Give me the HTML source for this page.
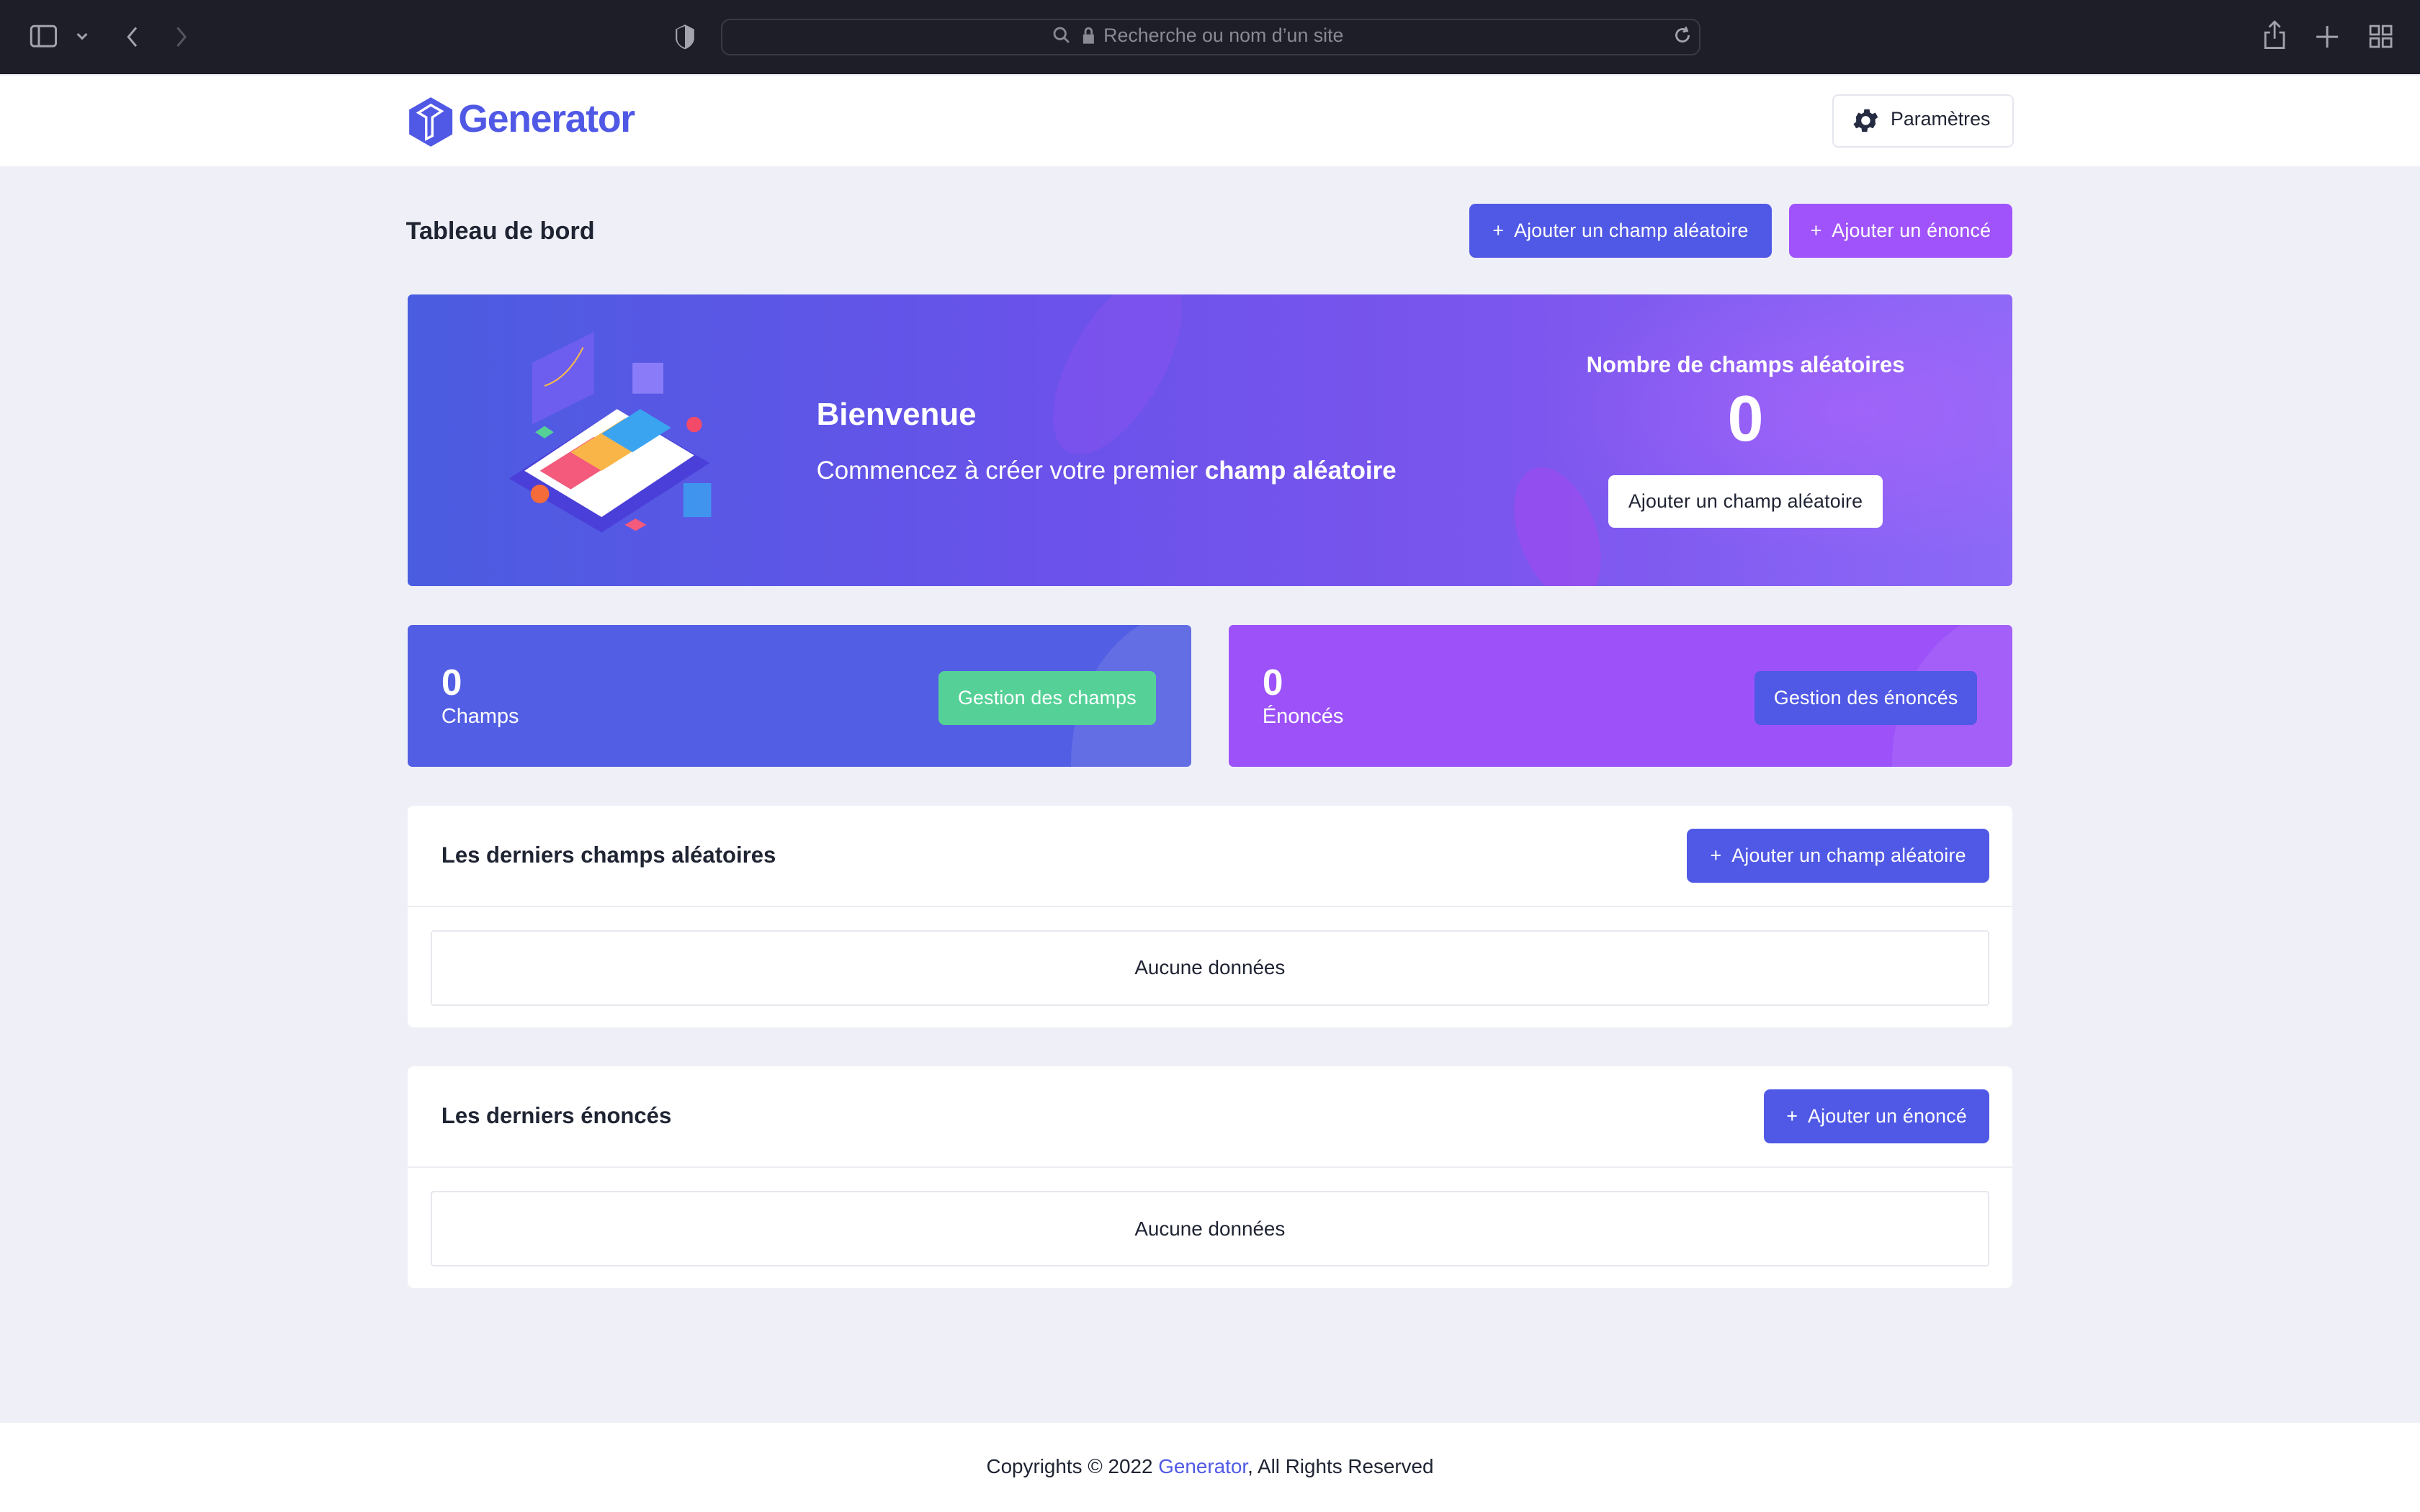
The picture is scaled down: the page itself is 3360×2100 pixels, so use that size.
<!DOCTYPE html>
<html><head><meta charset="utf-8"><style>
html,body{margin:0;padding:0}
body{width:1568px;height:980px;zoom:2.142857;position:relative;overflow:hidden;background:#eff0f7;font-family:"Liberation Sans",sans-serif;color:#1f2433}
.a{position:absolute}
.btn{position:absolute;color:#fff;font-size:12.5px;border-radius:4px;display:flex;align-items:center;justify-content:center;letter-spacing:.1px}
.blue{background:#5059e5}.purple{background:#a053fb}
.sec{position:absolute;left:264px;width:1040px;background:#fff;border-radius:4px}
.sec h3{position:absolute;left:22px;margin:0;font-size:14.5px;font-weight:bold;color:#1f2433}
.hl{position:absolute;left:0;right:0;border-top:1px solid #eceef4}
.empty{position:absolute;left:15px;width:1008px;height:47px;border:1px solid #e6e8ef;border-radius:2px;display:flex;align-items:center;justify-content:center;font-size:13px}
</style></head><body>
<div class="a" style="left:0;top:0;width:1568px;height:48px;background:#1e1e28"></div>
<svg class="a" style="left:18px;top:15px" width="90" height="18" viewBox="0 0 90 18" fill="none" stroke="#a3a3ad" stroke-width="1.4">
<rect x="2" y="2" width="16" height="13" rx="2"/><line x1="7" y1="2" x2="7" y2="15"/>
<path d="M32 7l3 3 3-3"/><path d="M70 3l-5 6 5 6"/></svg>
<svg class="a" style="left:112px;top:15px" width="12" height="18" fill="none" stroke="#555560" stroke-width="1.4"><path d="M3 3l5 6-5 6"/></svg>
<svg class="a" style="left:437px;top:15px" width="14" height="18"><path d="M7 1l6 3v6c0 3-3 6-6 7-3-1-6-4-6-7V4z" fill="#a3a3ad"/><path d="M7 2v14c-3-1-5-3-5-6V4z" fill="#1e1e28"/></svg>
<div class="a" style="left:467px;top:12px;width:633px;height:22px;border:1px solid #3a3a44;border-radius:6px;background:#1e1e28"></div>
<svg class="a" style="left:682px;top:17px" width="32" height="13" fill="none" stroke="#8a8a94" stroke-width="1.3"><circle cx="5" cy="5" r="3.6"/><path d="M7.7 7.7l3 3"/><rect x="20" y="5.5" width="7" height="6" fill="#8a8a94" stroke="none"/><path d="M21.5 5.5v-2a2 2 0 014 0v2"/></svg>
<div class="a" style="left:715px;top:16px;font-size:12.5px;color:#8a8a94">Recherche ou nom d’un site</div>
<svg class="a" style="left:1083px;top:16px" width="14" height="14" fill="none" stroke="#a3a3ad" stroke-width="1.3"><path d="M11 7a4 4 0 11-1.5-3.1"/><path d="M9 1.5l1 2.6-2.7.6"/></svg>
<svg class="a" style="left:1466px;top:13px" width="16" height="20" fill="none" stroke="#a3a3ad" stroke-width="1.3"><path d="M8 1v11M4.5 4.5L8 1l3.5 3.5"/><path d="M5 8H2v10h12V8h-3"/></svg>
<svg class="a" style="left:1500px;top:16px" width="16" height="16" stroke="#a3a3ad" stroke-width="1.4"><path d="M8 1v14M1 8h14"/></svg>
<svg class="a" style="left:1535px;top:16px" width="16" height="16" fill="none" stroke="#a3a3ad" stroke-width="1.3"><rect x="1" y="1" width="5.5" height="5.5"/><rect x="9" y="1" width="5.5" height="5.5"/><rect x="1" y="9" width="5.5" height="5.5"/><rect x="9" y="9" width="5.5" height="5.5"/></svg>
<div class="a" style="left:0;top:49px;width:1568px;height:59px;background:#fff"></div>
<svg class="a" style="left:264px;top:62px" width="30" height="34" viewBox="0 0 30 34"><path d="M15 1l14 8v16l-14 8-14-8V9z" fill="#5059e5"/><path d="M7 11l8-5 7 4-6 4v12l-4 2V14z" fill="none" stroke="#fff" stroke-width="1.6"/></svg>
<div class="a" style="left:297px;top:63px;font-size:25px;font-weight:bold;color:#5059e5;letter-spacing:-.6px">Generator</div>
<div class="a" style="left:1187px;top:61px;width:116px;height:33px;border:1px solid #e4e6f0;border-radius:4px;background:#fff"></div>
<svg class="a" style="left:1199px;top:68px" width="20" height="20" viewBox="0 0 24 24"><path fill="#252b40" d="M19.4 13a7.5 7.5 0 000-2l2.1-1.6-2-3.5-2.5 1a7.6 7.6 0 00-1.7-1l-.4-2.7h-4l-.4 2.7a7.6 7.6 0 00-1.7 1l-2.5-1-2 3.5L4.6 11a7.5 7.5 0 000 2l-2.1 1.6 2 3.5 2.5-1a7.6 7.6 0 001.7 1l.4 2.7h4l.4-2.7a7.6 7.6 0 001.7-1l2.5 1 2-3.5zM12 15.5a3.5 3.5 0 110-7 3.5 3.5 0 010 7z"/></svg>
<div class="a" style="left:1225px;top:70px;font-size:12.5px">Paramètres</div>
<div class="a" style="left:263px;top:141px;font-size:16px;font-weight:bold;color:#1f2433">Tableau de bord</div>
<div class="btn blue" style="left:952px;top:132px;width:196px;height:35px">+&nbsp; Ajouter un champ aléatoire</div>
<div class="btn purple" style="left:1159px;top:132px;width:145px;height:35px">+&nbsp; Ajouter un énoncé</div>
<div class="a" style="left:264px;top:191px;width:1040px;height:189px;border-radius:3px;overflow:hidden;background:linear-gradient(90deg,#4a5ce0 0%,#6a52ea 40%,#7c56ee 70%,#8d69f7 100%)">
<div class="a" style="left:700px;top:0;width:340px;height:189px;background:radial-gradient(ellipse at 70% 40%,rgba(190,100,255,.45),transparent 60%)"></div>
<div class="a" style="left:430px;top:-20px;width:60px;height:130px;border-radius:50%;background:rgba(150,80,240,.35);transform:rotate(30deg)"></div>
<div class="a" style="left:720px;top:110px;width:50px;height:90px;border-radius:50%;background:rgba(170,70,240,.5);transform:rotate(-20deg)"></div>
</div>
<svg class="a" style="left:325px;top:215px" width="145" height="140" viewBox="0 0 145 140">
<path d="M20 20l40-20v40l-40 20z" fill="#6d5ef0"/><path d="M28 35q15-5 25-25" stroke="#f5b84a" fill="none"/>
<path d="M5 95l70-45 60 35-70 45z" fill="#4a3fd8"/><path d="M15 90l60-40 50 30-60 40z" fill="#fff"/>
<path d="M25 90l35-22 20 12-35 22z" fill="#f35a7c"/><path d="M45 78l35-22 20 12-35 22z" fill="#f9b548"/><path d="M65 66l25-16 20 12-25 16z" fill="#3aa4f0"/>
<circle cx="25" cy="105" r="6" fill="#f66b3a"/><circle cx="125" cy="60" r="5" fill="#f44a6a"/><rect x="118" y="98" width="18" height="22" fill="#3aa4f0" opacity=".8"/>
<rect x="85" y="20" width="20" height="20" fill="#8a7cf8"/><path d="M80 125l7-4 7 4-7 4z" fill="#f35a7c"/><path d="M22 65l6-4 6 4-6 4z" fill="#55d197"/>
</svg>
<div class="a" style="left:529px;top:257px;font-size:20.5px;font-weight:bold;color:#fff">Bienvenue</div>
<div class="a" style="left:529px;top:296px;font-size:16.3px;color:#fff">Commencez à créer votre premier <b>champ aléatoire</b></div>
<div class="a" style="left:1000px;top:228px;width:262px;text-align:center;font-size:14.5px;font-weight:bold;color:#fff">Nombre de champs aléatoires</div>
<div class="a" style="left:1000px;top:248px;width:262px;text-align:center;font-size:42px;font-weight:bold;color:#fff">0</div>
<div class="btn" style="left:1042px;top:308px;width:178px;height:34px;background:#fff;color:#1f2433">Ajouter un champ aléatoire</div>
<div class="a" style="left:264px;top:405px;width:508px;height:92px;border-radius:3px;overflow:hidden;background:#525ee3"><div class="a" style="left:430px;top:-10px;width:160px;height:200px;border-radius:50%;background:rgba(255,255,255,.1)"></div></div>
<div class="a" style="left:286px;top:428px;font-size:24px;font-weight:bold;color:#fff">0</div>
<div class="a" style="left:286px;top:457px;font-size:13.5px;color:#fff">Champs</div>
<div class="btn" style="left:608px;top:435px;width:141px;height:35px;background:#55d197">Gestion des champs</div>
<div class="a" style="left:796px;top:405px;width:508px;height:92px;border-radius:3px;overflow:hidden;background:#9c52f8"><div class="a" style="left:430px;top:-10px;width:160px;height:200px;border-radius:50%;background:rgba(255,255,255,.08)"></div></div>
<div class="a" style="left:818px;top:428px;font-size:24px;font-weight:bold;color:#fff">0</div>
<div class="a" style="left:818px;top:457px;font-size:13.5px;color:#fff">Énoncés</div>
<div class="btn blue" style="left:1137px;top:435px;width:144px;height:35px">Gestion des énoncés</div>
<div class="sec" style="top:522px;height:144px">
<h3 style="top:24px">Les derniers champs aléatoires</h3>
<div class="btn blue" style="left:829px;top:15px;width:196px;height:35px">+&nbsp; Ajouter un champ aléatoire</div>
<div class="hl" style="top:65px"></div>
<div class="empty" style="top:81px">Aucune données</div>
</div>
<div class="sec" style="top:691px;height:144px">
<h3 style="top:24px">Les derniers énoncés</h3>
<div class="btn blue" style="left:879px;top:15px;width:146px;height:35px">+&nbsp; Ajouter un énoncé</div>
<div class="hl" style="top:65px"></div>
<div class="empty" style="top:81px">Aucune données</div>
</div>
<div class="a" style="left:0;top:922px;width:1568px;height:58px;background:#fff"></div>
<div class="a" style="left:0;top:943px;width:1568px;text-align:center;font-size:13px;color:#1f2433">Copyrights © 2022 <span style="color:#5059e5">Generator</span>, All Rights Reserved</div>
</body></html>
